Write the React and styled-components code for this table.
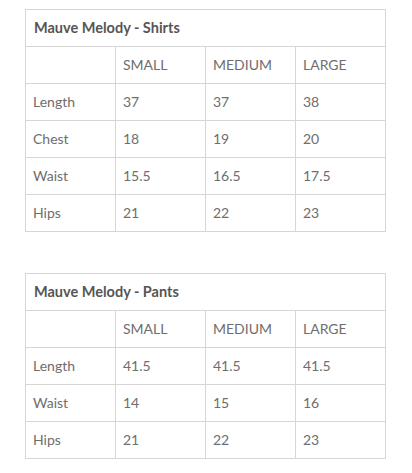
import React from "react";
import styled, { createGlobalStyle } from "styled-components";

const Global = createGlobalStyle`
  html, body { margin: 0; padding: 0; background: #fff; }
  body { font-family: "Lato", "Liberation Sans", sans-serif; }
`;

const Page = styled.div`
  padding: 9px 0 0 25px;
  display: flex;
  flex-direction: column;
  gap: 41px;
`;

const Table = styled.table`
  border-collapse: collapse;
  width: 361px;
  table-layout: fixed;
  color: #6e6e6e;
  font-size: 14px;
`;

const Title = styled.th`
  border: 1px solid #d6d6d6;
  height: 37px;
  padding: 0 8px 2px;
  text-align: left;
  font-weight: 700;
  font-size: 14.5px;
  color: #555;
  box-sizing: border-box;
`;

const Cell = styled.td`
  border: 1px solid #d6d6d6;
  height: 37px;
  padding: 0 7px 2px;
  text-align: left;
  box-sizing: border-box;
  vertical-align: middle;
  text-transform: ${(p) => (p.$head ? "uppercase" : "none")};
`;

const charts = [
  {
    title: "Mauve Melody - Shirts",
    rows: [
      ["Length", "37", "37", "38"],
      ["Chest", "18", "19", "20"],
      ["Waist", "15.5", "16.5", "17.5"],
      ["Hips", "21", "22", "23"],
    ],
  },
  {
    title: "Mauve Melody - Pants",
    rows: [
      ["Length", "41.5", "41.5", "41.5"],
      ["Waist", "14", "15", "16"],
      ["Hips", "21", "22", "23"],
    ],
  },
];

export default function App() {
  return (
    <>
      <Global />
      <Page>
        {charts.map((c) => (
          <Table key={c.title}>
            <colgroup>
              <col style={{ width: 90 }} />
              <col style={{ width: 90 }} />
              <col style={{ width: 90 }} />
              <col style={{ width: 90 }} />
            </colgroup>
            <tbody>
              <tr>
                <Title colSpan={4}>{c.title}</Title>
              </tr>
              <tr>
                <Cell />
                <Cell $head>Small</Cell>
                <Cell $head>Medium</Cell>
                <Cell $head>Large</Cell>
              </tr>
              {c.rows.map((r) => (
                <tr key={r[0]}>
                  {r.map((v, i) => (
                    <Cell key={i}>{v}</Cell>
                  ))}
                </tr>
              ))}
            </tbody>
          </Table>
        ))}
      </Page>
    </>
  );
}
